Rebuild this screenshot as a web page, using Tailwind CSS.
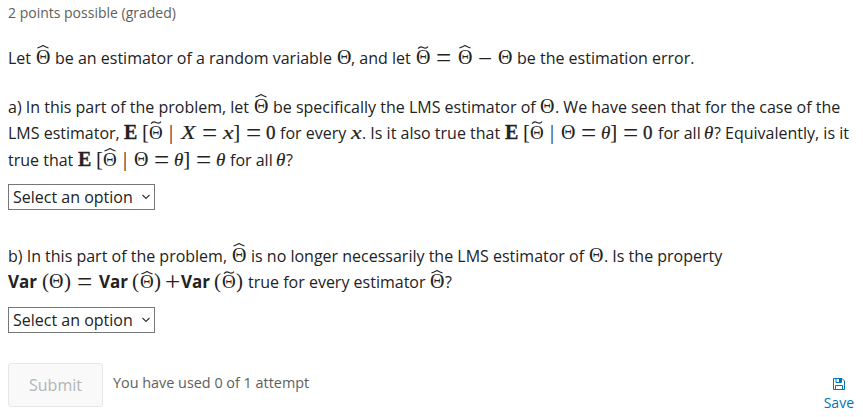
<!DOCTYPE html>
<html lang="en">
<head>
<meta charset="utf-8">
<title>Estimator problem</title>
<script src="https://cdn.jsdelivr.net/npm/@tailwindcss/browser@4"></script>
</head>
<body class="bg-white font-['Open_Sans',sans-serif] text-base text-[#222] w-[863px] h-[417px] overflow-hidden">
<svg class="hidden">
  <symbol id="hat" viewBox="0 0 14 5"><path d="M1.5 3.9Q5 2.7 7 1.500Q9 2.7 12.5 3.9" fill="none" stroke="#222" stroke-width="1.1"/></symbol>
  <symbol id="tilde" viewBox="0 0 14 5"><path d="M2 3.6C4 1.200 5.5 1.6 7 2.4S10.5 3.6 12 1.6" fill="none" stroke="#222" stroke-width="1.1"/></symbol>
</svg>
<main class="flex flex-col pl-2 *:shrink-0">
  <p class="h-[45px] pt-[3px] text-[14px] leading-5 text-[#5e5e5e]">2 points possible (graded)</p>

  <p class="flex items-baseline h-[49px] leading-[26px] whitespace-pre *:shrink-0">
    <span class="w-[28px]">Let</span>
    <span class="relative w-[19px] font-['Liberation_Serif',serif] text-[20px] leading-4">Θ<svg class="absolute left-0 -top-[5px] w-[14px] h-[5px]"><use href="#hat"/></svg></span>
    <span class="w-[282px]">be an estimator of a random variable</span>
    <span class="w-[14px] font-['Liberation_Serif',serif] text-[20px] leading-4">Θ</span>
    <span class="w-[65px]">, and let</span>
    <span class="relative w-[20px] font-['Liberation_Serif',serif] text-[20px] leading-4">Θ<svg class="absolute left-0 -top-[4px] w-[14px] h-[5px]"><use href="#tilde"/></svg></span>
    <span class="w-[22px] font-['Liberation_Serif',serif] text-[27px] leading-4 translate-y-[3px]">=</span>
    <span class="relative w-[20px] font-['Liberation_Serif',serif] text-[20px] leading-4">Θ<svg class="absolute left-0 -top-[5px] w-[14px] h-[5px]"><use href="#hat"/></svg></span>
    <span class="w-[20px] font-['Liberation_Serif',serif] text-[25px] leading-4 translate-y-[3px]">−</span>
    <span class="w-[19px] font-['Liberation_Serif',serif] text-[20px] leading-4">Θ</span>
    <span>be the estimation error.</span>
  </p>

  <p class="flex items-baseline h-[26px] leading-[26px] whitespace-pre *:shrink-0">
    <span class="w-[246px]">a) In this part of the problem, let</span>
    <span class="relative w-[19px] font-['Liberation_Serif',serif] text-[20px] leading-4">Θ<svg class="absolute left-0 -top-[5px] w-[14px] h-[5px]"><use href="#hat"/></svg></span>
    <span class="w-[267px]">be specifically the LMS estimator of</span>
    <span class="w-[15px] font-['Liberation_Serif',serif] text-[20px] leading-4">Θ</span>
    <span>. We have seen that for the case of the</span>
  </p>
  <p class="flex items-baseline h-[27px] leading-[26px] whitespace-pre *:shrink-0">
    <span class="w-[116px]">LMS estimator,</span>
    <span class="w-[18px] font-['Liberation_Serif',serif] text-[20px] leading-4 font-bold [-webkit-text-stroke:0.3px]">E</span>
    <span class="w-[7px] font-['Liberation_Serif',serif] text-[21px] leading-4">[</span>
    <span class="relative w-[20px] font-['Liberation_Serif',serif] text-[19px] leading-4">Θ<svg class="absolute left-0 -top-[5px] w-[14px] h-[5px]"><use href="#tilde"/></svg></span>
    <span class="w-[12px] font-['Liberation_Serif',serif] text-[20px] leading-4">|</span>
    <span class="w-[21px]"><span class="inline-block font-['Liberation_Serif',serif] text-[19px] leading-4 italic origin-left scale-x-[1.25] [-webkit-text-stroke:0.2px]">X</span></span>
    <span class="w-[21px] font-['Liberation_Serif',serif] text-[27px] leading-4 translate-y-[3px]">=</span>
    <span class="w-[10px]"><span class="inline-block font-['Liberation_Serif',serif] text-[19px] leading-4 italic origin-left scale-x-[1.25] [-webkit-text-stroke:0.2px]">x</span></span>
    <span class="w-[13px] font-['Liberation_Serif',serif] text-[22px] leading-4">]</span>
    <span class="w-[20px] font-['Liberation_Serif',serif] text-[27px] leading-4 translate-y-[3px]">=</span>
    <span class="w-[14px] font-['Liberation_Serif',serif] text-[19px] leading-4 [-webkit-text-stroke:0.3px]">0</span>
    <span class="w-[71px]">for every</span>
    <span class="w-[11px]"><span class="inline-block font-['Liberation_Serif',serif] text-[19px] leading-4 italic origin-left scale-x-[1.25] [-webkit-text-stroke:0.2px]">x</span></span>
    <span class="w-[143px]">. Is it also true that</span>
    <span class="w-[18px] font-['Liberation_Serif',serif] text-[20px] leading-4 font-bold [-webkit-text-stroke:0.3px]">E</span>
    <span class="w-[7px] font-['Liberation_Serif',serif] text-[21px] leading-4">[</span>
    <span class="relative w-[20px] font-['Liberation_Serif',serif] text-[19px] leading-4">Θ<svg class="absolute left-0 -top-[5px] w-[14px] h-[5px]"><use href="#tilde"/></svg></span>
    <span class="w-[11px] font-['Liberation_Serif',serif] text-[20px] leading-4">|</span>
    <span class="w-[20px] font-['Liberation_Serif',serif] text-[20px] leading-4">Θ</span>
    <span class="w-[20px] font-['Liberation_Serif',serif] text-[27px] leading-4 translate-y-[3px]">=</span>
    <span class="w-[9px] font-['Liberation_Serif',serif] text-[19px] leading-4 italic [-webkit-text-stroke:0.2px]">θ</span>
    <span class="w-[13px] font-['Liberation_Serif',serif] text-[22px] leading-4">]</span>
    <span class="w-[20px] font-['Liberation_Serif',serif] text-[27px] leading-4 translate-y-[3px]">=</span>
    <span class="w-[15px] font-['Liberation_Serif',serif] text-[19px] leading-4 [-webkit-text-stroke:0.3px]">0</span>
    <span class="w-[46px]">for all</span>
    <span class="w-[10px] font-['Liberation_Serif',serif] text-[19px] leading-4 italic [-webkit-text-stroke:0.2px]">θ</span>
    <span>? Equivalently, is it</span>
  </p>
  <p class="flex items-baseline h-[37px] leading-[26px] whitespace-pre *:shrink-0">
    <span class="w-[70px]">true that</span>
    <span class="w-[18px] font-['Liberation_Serif',serif] text-[20px] leading-4 font-bold [-webkit-text-stroke:0.3px]">E</span>
    <span class="w-[7px] font-['Liberation_Serif',serif] text-[21px] leading-4">[</span>
    <span class="relative w-[20px] font-['Liberation_Serif',serif] text-[19px] leading-4">Θ<svg class="absolute left-0 -top-[5px] w-[14px] h-[5px]"><use href="#hat"/></svg></span>
    <span class="w-[11px] font-['Liberation_Serif',serif] text-[20px] leading-4">|</span>
    <span class="w-[20px] font-['Liberation_Serif',serif] text-[20px] leading-4">Θ</span>
    <span class="w-[20px] font-['Liberation_Serif',serif] text-[27px] leading-4 translate-y-[3px]">=</span>
    <span class="w-[9px] font-['Liberation_Serif',serif] text-[19px] leading-4 italic [-webkit-text-stroke:0.2px]">θ</span>
    <span class="w-[13px] font-['Liberation_Serif',serif] text-[22px] leading-4">]</span>
    <span class="w-[20px] font-['Liberation_Serif',serif] text-[27px] leading-4 translate-y-[3px]">=</span>
    <span class="w-[14px] font-['Liberation_Serif',serif] text-[19px] leading-4 italic [-webkit-text-stroke:0.2px]">θ</span>
    <span class="w-[46px]">for all</span>
    <span class="w-[10px] font-['Liberation_Serif',serif] text-[19px] leading-4 italic [-webkit-text-stroke:0.2px]">θ</span>
    <span>?</span>
  </p>
  <div class="flex items-center w-[147px] h-[26px] border border-[#767676] pl-1 pr-[4px] justify-between leading-6">
    <span>Select an option</span>
    <svg class="w-[8px] h-[6px]" viewBox="0 0 8 6"><path d="M.5 1L4 4.5L7.500 1" fill="none" stroke="#333" stroke-width="1.1"/></svg>
  </div>

  <p class="mt-[33px] flex items-baseline h-[26px] leading-[26px] whitespace-pre *:shrink-0">
    <span class="w-[224px]">b) In this part of the problem,</span>
    <span class="relative w-[19px] font-['Liberation_Serif',serif] text-[20px] leading-4">Θ<svg class="absolute left-0 -top-[5px] w-[14px] h-[5px]"><use href="#hat"/></svg></span>
    <span class="w-[338px]">is no longer necessarily the LMS estimator of</span>
    <span class="w-[15px] font-['Liberation_Serif',serif] text-[20px] leading-4">Θ</span>
    <span>. Is the property</span>
  </p>
  <p class="flex items-baseline h-[38px] leading-[26px] whitespace-pre *:shrink-0">
    <span class="w-[34px] text-[17px] font-bold">Var</span>
    <span class="w-[7px] font-['Liberation_Serif',serif] text-[21px] leading-4">(</span>
    <span class="w-[15px] font-['Liberation_Serif',serif] text-[20px] leading-4">Θ</span>
    <span class="w-[13px] font-['Liberation_Serif',serif] text-[21px] leading-4">)</span>
    <span class="w-[22px] font-['Liberation_Serif',serif] text-[27px] leading-4 translate-y-[3px]">=</span>
    <span class="w-[33px] text-[17px] font-bold">Var</span>
    <span class="w-[8px] font-['Liberation_Serif',serif] text-[21px] leading-4">(</span>
    <span class="relative w-[14px] font-['Liberation_Serif',serif] text-[19px] leading-4">Θ<svg class="absolute left-0 -top-[4px] w-[14px] h-[5px]"><use href="#hat"/></svg></span>
    <span class="w-[11px] font-['Liberation_Serif',serif] text-[21px] leading-4">)</span>
    <span class="w-[16px] font-['Liberation_Serif',serif] text-[27px] leading-4 translate-y-[3px]">+</span>
    <span class="w-[33px] text-[17px] font-bold">Var</span>
    <span class="w-[8px] font-['Liberation_Serif',serif] text-[21px] leading-4">(</span>
    <span class="relative w-[14px] font-['Liberation_Serif',serif] text-[19px] leading-4">Θ<svg class="absolute left-0 -top-[4px] w-[14px] h-[5px]"><use href="#tilde"/></svg></span>
    <span class="w-[12px] font-['Liberation_Serif',serif] text-[21px] leading-4">)</span>
    <span class="w-[182px]">true for every estimator</span>
    <span class="relative w-[15px] font-['Liberation_Serif',serif] text-[20px] leading-4">Θ<svg class="absolute left-0 -top-[4px] w-[14px] h-[5px]"><use href="#hat"/></svg></span>
    <span>?</span>
  </p>
  <div class="flex items-center w-[147px] h-[26px] border border-[#767676] pl-1 pr-[4px] justify-between leading-6">
    <span>Select an option</span>
    <svg class="w-[8px] h-[6px]" viewBox="0 0 8 6"><path d="M.5 1L4 4.500L7.500 1" fill="none" stroke="#333" stroke-width="1.1"/></svg>
  </div>

  <div class="mt-[30px] flex items-start pr-[9px]">
    <button class="w-[95px] h-[44px] rounded-[3px] border border-[#e7e7e7] bg-[#f9f9f9] text-[#b4b4b4]">Submit</button>
    <span class="ml-[10px] mt-[10px] text-[14.4px] leading-5 text-[#5e5e5e]">You have used 0 of 1 attempt</span>
    <div class="ml-auto mt-[15px] flex flex-col items-center text-sm leading-5 text-[#0075b4]">
      <svg class="w-3 h-3" viewBox="0 0 12 12" fill="none" stroke="#0075b4"><path d="M.5.5H9L11.500 3V11.500H.5ZM3 .5V4.500H8.500V.5M2.500 11.500V7.500H9.500V11.500"/><path d="M6 1H8V4H6Z" fill="#0075b4" stroke="none"/></svg>
      <span class="mt-[3px]">Save</span>
    </div>
  </div>
</main>
</body>
</html>
